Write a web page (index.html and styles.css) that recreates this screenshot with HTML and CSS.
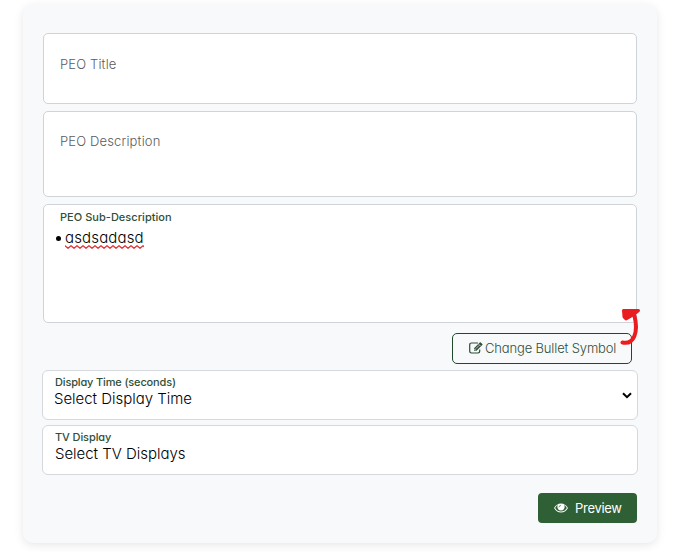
FILE: index.html
```html
<!DOCTYPE html>
<html lang="en">
<head>
<meta charset="utf-8">
<title>PEO</title>
<link rel="stylesheet" href="styles.css">
</head>
<body>
<form class="card">
  <div class="field title"><span class="placeholder t1">PEO Title</span></div>
  <div class="field description"><span class="placeholder t2">PEO Description</span></div>
  <div class="field sub">
    <span class="label l1">PEO Sub-Description</span>
    <div class="bullet"><i class="dot"></i><span class="typed">asdsadasd</span>
      <svg class="squiggle" width="79" height="4" viewBox="0 0 79 4"><defs><pattern id="wave" width="6" height="4" patternUnits="userSpaceOnUse"><path d="M-1 0 0 .7 3 3.3 6 .7 7 0"/></pattern></defs><rect width="79" height="4" fill="url(#wave)"/></svg>
    </div>
  </div>
  <div class="symbol-row">
    <button type="button" class="outline">
      <svg class="edit" width="14" height="12" viewBox="0 0 14 12"><path class="line" d="M9 1H2.6Q.7 1 .7 2.9v6.2Q.7 11 2.6 11h6.2q1.9 0 1.9-1.9V7.4"/><path d="M5 6.2 10.8.4q.5-.5 1 0l1.5 1.5q.5.5 0 1L7.5 8.7H5z"/><path class="cut" d="m9.7 2.2 2 2M6.800 6.700l3.300-3.300M5.700 6.800v1.100h1.100"/></svg>
      <span class="change">Change Bullet Symbol</span>
    </button>
    <svg class="arrow" width="23" height="39" viewBox="0 0 23 39"><path class="stroke" d="M2.500 35.500C14 38 18.500 25 14.500 9"/><path class="head" d="M3.500 3.500 18.500 3.500 13 8 6 12 4 10z"/></svg>
  </div>
  <div class="field select">
    <span class="label l2">Display Time (seconds)</span>
    <span class="value v1">Select Display Time</span>
    <svg class="chevron" width="10" height="7" viewBox="0 0 10 7"><path d="m1 1.200 4 4 4-4"/></svg>
  </div>
  <div class="field select">
    <span class="label l3">TV Display</span>
    <span class="value v2">Select TV Displays</span>
  </div>
  <button type="button" class="preview">
    <svg width="14" height="10" viewBox="0 0 14 10"><path d="M0 5Q2.700.400 7 .400T14 5Q11.300 9.600 7 9.600T0 5z" fill="#fff"/><path d="M3.900 1.800Q2 3 1.100 5 3.300 8.600 7 8.600T12.900 5Q12 3 10.100 1.800Q11.200 4 10 6 9 7.500 7 7.500T4 6Q2.800 4 3.900 1.800" fill="#2f5f35"/><path d="M5 4.300Q5 2.500 7 2.500" fill="none" stroke="#2f5f35" stroke-width=".7"/></svg>
    <span class="preview-text">Preview</span>
  </button>
</form>
</body>
</html>
```
FILE: styles.css
```css
* { box-sizing: border-box; }
body {
  margin: 0;
  padding: 5px 16px 9px 23px;
  height: 552px;
  overflow: hidden;
  background: #fff;
  font-family: Inter, "Liberation Sans", sans-serif;
  font-feature-settings: "cv11", "ss03";
}
span { white-space: nowrap; }
svg { flex-shrink: 0; }
.card {
  display: flex;
  flex-direction: column;
  width: 634px;
  height: 538px;
  padding: 28px 20px 20px;
  border-radius: 10px;
  background: #f8f9fb;
  box-shadow: 0 2px 10px rgba(0, 0, 0, .1);
}
.field {
  display: flex;
  flex-direction: column;
  align-items: flex-start;
  flex-shrink: 0;
  border: 1px solid #ced4da;
  border-radius: 5px;
  background: #fff;
}
.title { height: 71px; padding: 20px 16px; }
.description { height: 86px; margin-top: 7px; padding: 19px 16px; }
.placeholder { font-size: 13px; line-height: 20px; font-weight: 300; color: #5c5c5c; letter-spacing: .15px; }
.sub { height: 119px; margin-top: 7px; padding: 4px 12px; }
.label { font-size: 11px; line-height: 16px; font-weight: 500; color: #304f38; }
.l1 { letter-spacing: .03px; }
.l2 { letter-spacing: -.15px; }
.l3 { letter-spacing: -.1px; }
.sub .label { margin-left: 4px; }
.bullet { display: flex; position: relative; align-items: center; height: 22px; margin-top: 2px; }
.dot { width: 5px; height: 5px; margin: 0 4px 0 0; border-radius: 50%; background: #000; }
.typed { font-size: 15px; line-height: 22px; font-weight: 300; letter-spacing: .15px; }
.squiggle { position: absolute; left: 9px; bottom: 0; }
.squiggle path { fill: none; stroke: #e8262b; stroke-width: 1.2; }
.symbol-row { position: relative; display: flex; justify-content: flex-end; height: 31px; margin: 10px 5px 6px 0; }
.outline {
  display: flex;
  align-items: center;
  width: 180px;
  height: 31px;
  padding: 0 0 1px 16px;
  border: 1px solid #20482a;
  border-radius: 5px;
  background: transparent;
  color: #304f38;
  font: 300 13px/20px Inter, sans-serif;
  font-feature-settings: "cv11", "ss03";
  letter-spacing: -.15px;
}
.edit { margin-right: 2px; fill: #304f38; }
.edit .line { fill: none; stroke: #304f38; stroke-width: 1.2; }
.edit .cut { fill: none; stroke: #f8f9fb; stroke-width: .7; }
.arrow { position: absolute; right: -11px; top: -26px; }
.arrow path { stroke: #e91d20; stroke-linecap: round; stroke-linejoin: round; }
.arrow .stroke { fill: none; stroke-width: 4; }
.arrow .head { fill: #e91d20; stroke-width: 3; }
.select { position: relative; height: 50px; margin: 0 -1px 5px; padding: 3px 12px; border-color: #d5d8dc; border-radius: 6px; }
.value { font-size: 15px; line-height: 20px; margin-top: -1px; font-weight: 300; letter-spacing: -.03px; }
.v1 { margin-left: -1px; }
.chevron { position: absolute; right: 5px; top: 21px; }
.chevron path { fill: none; stroke: #000; stroke-width: 2; }
.preview {
  display: flex;
  align-items: center;
  align-self: flex-end;
  width: 99px;
  height: 30px;
  margin-top: 13px;
  padding: 0 0 1px 16px;
  border: 0;
  border-radius: 4px;
  background: #2f5f35;
  color: #fff;
  font: 400 13px/20px Inter, sans-serif;
  letter-spacing: -.3px;
}
.preview svg { margin-right: 7px; }
```
